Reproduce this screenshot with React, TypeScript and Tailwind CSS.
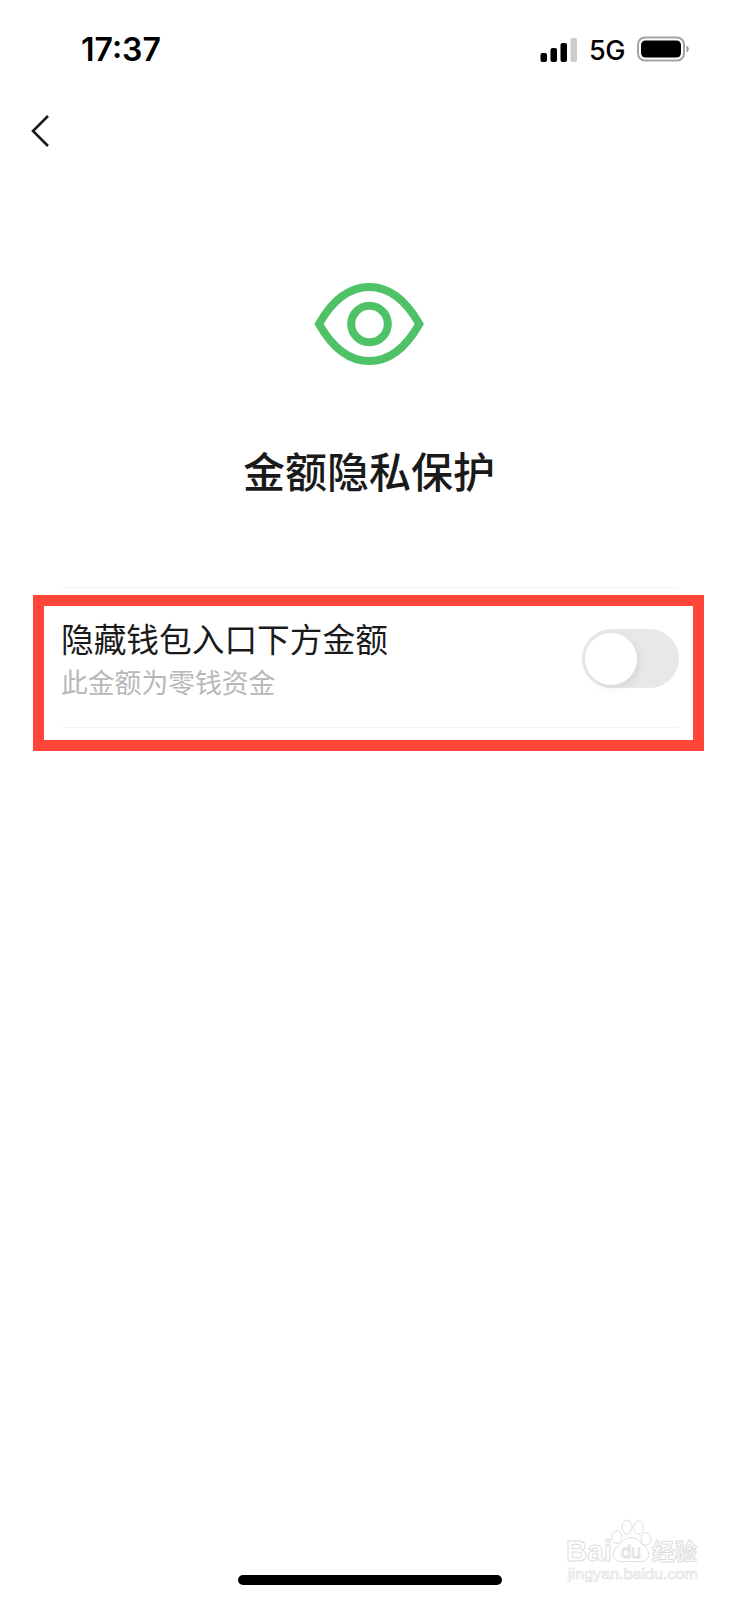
import React from "react";

function StatusBar() {
  return (
    <div className="h-[98px] flex items-center justify-between pl-[81px] pr-[50px] text-black">
      <p className="pt-[2px] font-['Inter',sans-serif] font-semibold text-[32px] leading-none">17:37</p>
      <div className="flex items-center">
        <svg width="37" height="25" viewBox="0 0 37 25">
          <rect x="0.5" y="16" width="6.5" height="9" rx="2" fill="#000" />
          <rect x="10.5" y="11" width="6.5" height="14" rx="2" fill="#000" />
          <rect x="20.5" y="6" width="6.5" height="19" rx="2" fill="#000" />
          <rect x="30.5" y="1" width="6.5" height="24" rx="2" fill="#ccc" />
        </svg>
        <p className="ml-3 pt-[2px] w-[36px] whitespace-nowrap font-['Inter',sans-serif] font-medium text-[27px] leading-none tracking-[-0.5px]">5G</p>
        <svg className="ml-[11px]" width="53" height="26" viewBox="0 0 53 26">
          <rect x="2" y="1.5" width="46" height="23" rx="7" fill="none" stroke="#a3a3a3" strokeWidth="2" />
          <rect x="5" y="4.5" width="40" height="17" rx="4.5" fill="#000" />
          <path d="M50.5 9.5c3 1.5 3 5.500 0 7z" fill="#999" />
        </svg>
      </div>
    </div>
  );
}

function EyeIcon() {
  return (
    <svg className="mr-px" width="110" height="84" viewBox="0 0 110 84" fill="none" stroke="#4fc267" strokeWidth="8">
      <path d="M5 42C18 19 35 5 55.300 5s37 14 50 37c-13 23-30 37-50 37S18 65 5 42z" />
      <circle cx="55.500" cy="42" r="18.300" />
    </svg>
  );
}

function Watermark() {
  return (
    <svg
      className="absolute right-[30px] bottom-[8px]"
      width="150"
      height="76"
      viewBox="0 0 150 76"
      fill="#fff"
      stroke="#dedede"
      strokeWidth="1"
    >
      <text x="7" y="45" fontSize="29" fontWeight="700" fontFamily="'Liberation Sans', sans-serif" textLength="46" lengthAdjust="spacingAndGlyphs">Bai</text>
      <ellipse cx="58" cy="21" rx="5" ry="6.500" />
      <ellipse cx="68" cy="11" rx="5" ry="7" />
      <ellipse cx="79.500" cy="11.500" rx="5" ry="6.500" />
      <ellipse cx="87" cy="23" rx="5" ry="6.500" />
      <path d="M72 21.500c-6 0-9 5-13 8.500-5 4-6 9-3.500 12.500 3 4 9 3 16.500 3s13.500 1 16.500-3c2.500-3.500 1.500-8.500-3.500-12.500-4-3.500-7-8.500-13-8.500z" />
      <text x="62" y="42" fontSize="18" fontFamily="'Liberation Sans', sans-serif" textLength="20" lengthAdjust="spacingAndGlyphs">du</text>
      <text x="93" y="44" fontSize="23" fontWeight="700" fontFamily="'Noto Sans CJK SC', sans-serif" textLength="45" lengthAdjust="spacingAndGlyphs">经验</text>
      <text x="9" y="63" fontSize="14.500" strokeWidth="0.6" fontFamily="'Liberation Sans', sans-serif" textLength="130" lengthAdjust="spacingAndGlyphs">jingyan.baidu.com</text>
    </svg>
  );
}

export default function App() {
  return (
    <div className="relative w-[739px] h-[1600px] overflow-hidden bg-white flex flex-col font-['Noto_Sans_CJK_SC',sans-serif] text-[#1a1a1a]">
      <StatusBar />

      <div className="h-[66px] pl-[31px] pt-4">
        <svg width="20" height="34" viewBox="0 0 20 34" fill="none" stroke="#1a1a1a" strokeWidth="2.600">
          <path d="M17 2L2 17 17 32" />
        </svg>
      </div>

      <div className="flex flex-col items-center pt-[118px]">
        <EyeIcon />
        <h1 className="mt-[74px] mr-px h-[60px] text-[42px] leading-[60px] font-medium">金额隐私保护</h1>
      </div>

      <div className="mt-[87px] mx-[61px] h-px bg-[#f4f4f4]"></div>

      <div className="mt-[7px] ml-[33px] w-[671px] h-[156px] border-[11px] border-[#ff4639] pl-[17px] pr-[14px]">
        <div className="h-[122px] flex justify-between border-b border-[#f4f4f4]">
          <div className="pt-[10px]">
            <p className="text-[32.7px] leading-[43px] font-normal">隐藏钱包入口下方金额</p>
            <p className="mt-[2px] text-[26.8px] leading-[42px] font-normal text-[#b8b8b8]">此金额为零钱资金</p>
          </div>
          <button className="mt-[23px] w-[97px] h-[59px] rounded-full bg-[#e8e8ea] p-[3px]">
            <div className="w-[52px] h-[52px] rounded-full bg-white shadow-[2px_3px_8px_rgba(0,0,0,0.08)]"></div>
          </button>
        </div>
      </div>

      <div className="mt-auto mb-[15px] self-center w-[264px] h-[10px] rounded-full bg-black"></div>
      <Watermark />
    </div>
  );
}
